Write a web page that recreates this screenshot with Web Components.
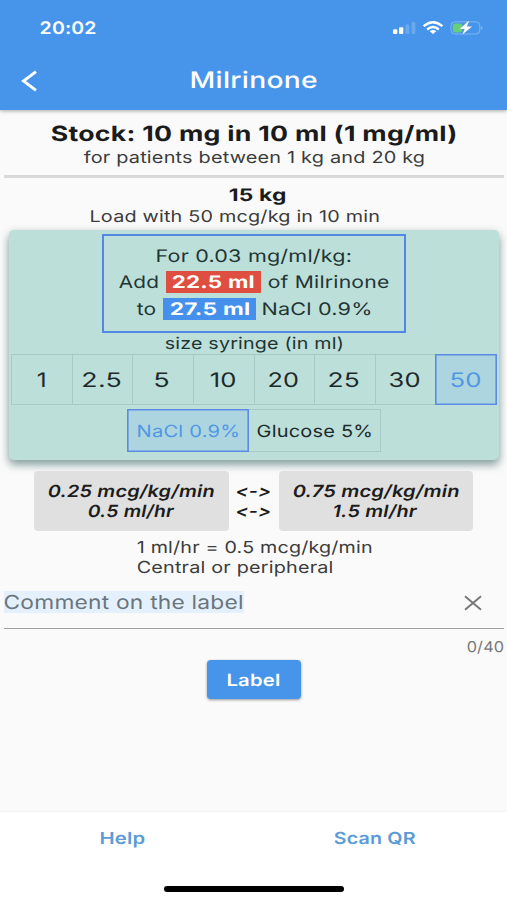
<!DOCTYPE html>
<html lang="en">
<head>
<meta charset="utf-8">
<title>Milrinone</title>
<style>
html,body{margin:0;padding:0}
body{width:507px;height:900px;overflow:hidden;background:#fafafa;font-family:Inter,"Liberation Sans",sans-serif;text-rendering:geometricPrecision}
</style>
</head>
<body>
<dose-app></dose-app>
<script>
const ctx = document.createElement('canvas').getContext('2d');

/* Text whose glyphs are stretched to a given inked width. */
class FitText extends HTMLElement {
  connectedCallback() {
    const w = +this.getAttribute('w'), size = +this.getAttribute('size') || 17;
    const weight = this.getAttribute('weight') || 400;
    const style = this.hasAttribute('italic') ? 'italic' : 'normal';
    const ls = size * 0.01;
    const root = this.attachShadow({mode: 'open'});
    root.innerHTML = `<style>
      :host{display:block;flex:none;width:${w}px;height:20px;line-height:20px;white-space:nowrap}
      span{display:inline-block;transform-origin:0 50%;font:${style} ${weight} ${size}px/20px Inter,"Liberation Sans",sans-serif;letter-spacing:${ls}px;text-rendering:geometricPrecision}
    </style><span><slot></slot></span>`;
    ctx.font = `${style} ${weight} ${size}px Inter, "Liberation Sans", sans-serif`;
    ctx.letterSpacing = ls + 'px';
    ctx.textRendering = 'geometricPrecision';
    const m = ctx.measureText(this.textContent);
    const k = w / (m.actualBoundingBoxRight + m.actualBoundingBoxLeft);
    root.querySelector('span').style.transform = `translateX(${m.actualBoundingBoxLeft * k - 0.3}px) scaleX(${k})`;
  }
}
customElements.define('fit-text', FitText);

/* Horizontal row: height, left inset and gap. */
class TextRow extends HTMLElement {
  connectedCallback() {
    this.attachShadow({mode: 'open'}).innerHTML = `<style>
      :host{display:flex;align-items:center;box-sizing:border-box;height:${this.getAttribute('h')}px;padding-left:${this.getAttribute('inset') || 0}px;gap:${this.getAttribute('gap') || 0}px}
    </style><slot></slot>`;
  }
}
customElements.define('text-row', TextRow);

const define = (name, html) => customElements.define(name, class extends HTMLElement {
  connectedCallback() {
    if (!this.shadowRoot) this.attachShadow({mode: 'open'}).innerHTML = html;
  }
});

define('status-icons', `<style>:host{display:block;width:92px;height:16px}svg{display:block}</style>
<svg width="92" height="16" viewBox="392 19.4 92 16">
  <g fill="#fff"><rect x="393" y="28.7" width="4.3" height="4.6" rx="1"/><rect x="399" y="26.6" width="4.3" height="6.7" rx="1"/>
  <g opacity=".18"><rect x="405.4" y="24" width="3.9" height="9.3" rx="1"/><rect x="411.5" y="21.3" width="3.9" height="12" rx="1"/></g></g>
  <g fill="none" stroke="#fff" stroke-width="2.4"><path d="M423.6 25.6Q433 17.6 442.4 25.6"/><path d="M427.2 28.9Q433 24.1 438.8 28.9"/></g>
  <path d="M429.7 30.6Q433 28 436.3 30.6L433 33.4Z" fill="#fff"/>
  <rect x="451" y="21.2" width="28.8" height="12.2" rx="4" fill="none" stroke="#fff" stroke-opacity=".3"/>
  <path d="M481.4 25.3Q483.5 27.3 481.4 29.3Z" fill="#fff" opacity=".45"/>
  <rect x="452.8" y="22.8" width="9.5" height="9" rx="2.3" fill="#66cf78"/>
  <path d="M468.2 20.6L459.8 28.4H464.6L462.4 34L472 26H466.8L469 20.6Z" fill="#fff"/>
</svg>`);

define('app-header', `<style>
:host{display:block;flex:none;height:110px;background:#4795eb;color:#fff;box-shadow:0 1px 4px #0005;z-index:1}
.status,.nav{display:flex;align-items:center;box-sizing:border-box}
.status{height:55px;padding:0 23px 0 41px;justify-content:space-between}
.nav{height:51px;padding-left:21px;gap:152.5px}
</style>
<div class="status"><fit-text w="55" size="17.2" weight="600">20:02</fit-text><status-icons></status-icons></div>
<div class="nav"><svg width="17" height="22" viewBox="0 0 17 22"><path d="M15 1.6L2.5 11L15 20.4" fill="none" stroke="#fff" stroke-width="2.9"/></svg>
<fit-text w="126.5" size="22.8" weight="500">Milrinone</fit-text></div>`);

define('volume-chip', `<style>:host{display:flex;flex:none;align-items:center;justify-content:center;height:22px;width:var(--w);background:var(--c);color:#fff}</style><slot></slot>`);

define('choice-cell', `<style>
:host{display:flex;align-items:center;justify-content:center;box-sizing:border-box;border:1px solid #a6cbc6;margin-right:-1px;color:#1c2b2a;min-width:0}
:host([selected]){border-color:#5b8be3;box-shadow:inset 0 0 0 .6px #5b8be3;background:#acd5df;color:#5297e4;z-index:1}
</style><slot></slot>`);

define('dose-card', `<style>
:host{display:flex;flex-direction:column;box-sizing:border-box;margin:0 8px 0 9px;height:230px;background:#bcdfda;border-radius:5px;box-shadow:0 5px 8px #3c6b6888,0 2px 10px #0002;color:#1f3533;padding-top:4px}
.recipe{box-sizing:border-box;width:304px;height:99px;margin-left:93px;border:2px solid #5487e2;padding-top:5px}
.sizes{display:grid;grid-template-columns:repeat(8,1fr);height:51px;margin:0 2px;padding-right:1px}
.sizes choice-cell{padding-right:2px}
.sizes choice-cell[selected]{padding-right:0}
.diluent{display:flex;height:43px;margin:4px 0 0 118px}
.diluent choice-cell:first-child{width:122px}.diluent choice-cell:last-child{width:133px}
</style>
<div class="recipe">
<text-row h="30" inset="53"><fit-text w="194" size="17.3">For 0.03 mg/ml/kg:</fit-text></text-row>
<text-row h="22" inset="15" gap="7"><fit-text w="39.5" size="17.3">Add</fit-text><volume-chip style="--w:95px;--c:#df4f41"><fit-text w="82" size="17.3" weight="700">22.5 ml</fit-text></volume-chip><fit-text w="121.5" size="17.3">of Milrinone</fit-text></text-row>
<text-row h="32" inset="33" gap="7"><fit-text w="19" size="17.3">to</fit-text><volume-chip style="--w:92.5px;--c:#4490ec"><fit-text w="79.5" size="17.3" weight="700">27.5 ml</fit-text></volume-chip><fit-text w="108.5" size="17.3">NaCl 0.9%</fit-text></text-row>
</div>
<text-row h="20" inset="155.5" style="margin-bottom:1px"><fit-text w="178" size="16.3">size syringe (in ml)</fit-text></text-row>
<div class="sizes">
<choice-cell><fit-text w="8.5" size="20">1</fit-text></choice-cell>
<choice-cell><fit-text w="37.5" size="20">2.5</fit-text></choice-cell>
<choice-cell><fit-text w="13.5" size="20">5</fit-text></choice-cell>
<choice-cell><fit-text w="26" size="20">10</fit-text></choice-cell>
<choice-cell><fit-text w="29.5" size="20">20</fit-text></choice-cell>
<choice-cell><fit-text w="29.5" size="20">25</fit-text></choice-cell>
<choice-cell><fit-text w="30" size="20">30</fit-text></choice-cell>
<choice-cell selected><fit-text w="30" size="20">50</fit-text></choice-cell>
</div>
<div class="diluent"><choice-cell selected><fit-text w="100.5" size="16.8">NaCl 0.9%</fit-text></choice-cell><choice-cell><fit-text w="113.5" size="16.8">Glucose 5%</fit-text></choice-cell></div>`);

define('rate-box', `<style>:host{display:flex;flex-direction:column;align-items:center;box-sizing:border-box;width:194.5px;height:60px;padding-top:10px;background:#e0e0e0;border-radius:4px}</style><slot></slot>`);

define('rate-range', `<style>
:host{display:flex;justify-content:center;gap:8px;margin-top:11px;height:60px;color:#1c1c1c}
.arrows{padding-top:10px}
</style>
<rate-box><fit-text w="166.5" size="16.8" weight="600" italic>0.25 mcg/kg/min</fit-text><fit-text w="87.5" size="16.8" weight="600" italic>0.5 ml/hr</fit-text></rate-box>
<div class="arrows"><fit-text w="34" size="16.8" weight="600" italic>&lt;-&gt;</fit-text><fit-text w="34" size="16.8" weight="600" italic>&lt;-&gt;</fit-text></div>
<rate-box><fit-text w="166.5" size="16.8" weight="600" italic>0.75 mcg/kg/min</fit-text><fit-text w="84.5" size="16.8" weight="600" italic>1.5 ml/hr</fit-text></rate-box>`);

define('comment-field', `<style>
:host{display:block;margin:0 3px 0 4px;color:#6b757c}
.entry{display:flex;justify-content:space-between;align-items:center;height:45px;box-sizing:border-box;padding:0 22px 9px 0;border-bottom:1px solid #a0a4a1}
mark{display:flex;align-items:center;height:22px;padding-left:.5px;width:239px;background:#e4f1fd;color:inherit}
.count{display:flex;justify-content:flex-end;padding-top:7px;color:#777}
</style>
<div class="entry"><mark><fit-text w="238" size="19.3">Comment on the label</fit-text></mark>
<svg width="18" height="16" viewBox="0 0 18 16" style="margin-top:3px"><path d="M1 1.2L17 14.8M17 1.2L1 14.8" fill="none" stroke="#777" stroke-width="1.9"/></svg></div>
<div class="count"><fit-text w="37" size="14.8">0/40</fit-text></div>`);

define('label-button', `<style>:host{display:flex;align-items:center;justify-content:center;width:94px;height:39px;margin:4px 0 0 207px;border-radius:4px;background:#4795eb;color:#fff;box-shadow:0 1px 3px #0006}</style><slot></slot>`);

define('bottom-bar', `<style>
:host{display:block;flex:none;height:88px;background:#fff;color:#5b9bd9;box-shadow:0 -1px 2px #00000009}
.home{width:180px;height:6px;margin:22px 0 0 164px;border-radius:3px;background:#000}
</style>
<text-row h="52" inset="100.5" gap="189"><fit-text w="44" size="16.6" weight="600">Help</fit-text><fit-text w="82" size="16.6" weight="600">Scan QR</fit-text></text-row>
<div class="home"></div>`);

define('dose-app', `<style>
:host{display:flex;flex-direction:column;width:507px;height:900px;background:#fafafa;color:#3c3c3c}
main{flex:1;min-height:0;padding-top:13px}
.strong{color:#1b1b1b}
.rule{height:3px;margin:6px 3px 0 4px;background:#d9d9d9}
</style>
<app-header></app-header>
<main>
<text-row class="strong" h="23" inset="50.5"><fit-text w="405.5" size="21" weight="700">Stock: 10 mg in 10 ml (1 mg/ml)</fit-text></text-row>
<text-row h="22.5" inset="83.5"><fit-text w="340" size="16.5">for patients between 1 kg and 20 kg</fit-text></text-row>
<div class="rule"></div>
<text-row class="strong" h="35" inset="228.5"><fit-text w="56.5" size="17.3" weight="700">15 kg</fit-text></text-row>
<text-row h="7" inset="90.5"><fit-text w="288.5" size="16.3">Load with 50 mcg/kg in 10 min</fit-text></text-row>
<dose-card style="margin-top:10.5px"></dose-card>
<rate-range></rate-range>
<text-row h="32" inset="136.5"><fit-text w="235" size="16.5">1 ml/hr = 0.5 mcg/kg/min</fit-text></text-row>
<text-row h="8" inset="136.5"><fit-text w="195.5" size="16.5">Central or peripheral</fit-text></text-row>
<comment-field style="margin-top:13px"></comment-field>
<label-button><fit-text w="52" size="16.8" weight="600">Label</fit-text></label-button>
</main>
<bottom-bar></bottom-bar>`);
</script>
</body>
</html>
